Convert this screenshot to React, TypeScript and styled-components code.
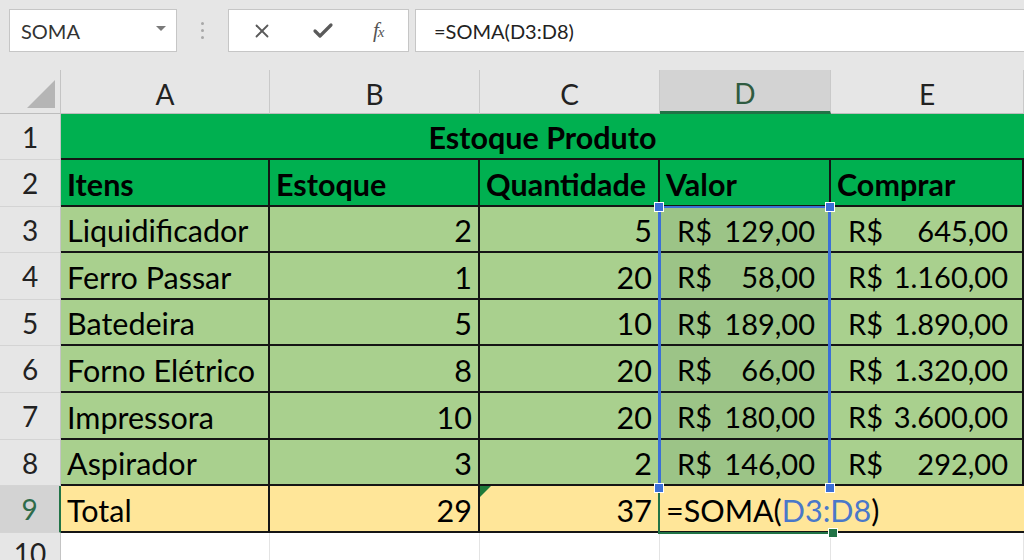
import React from 'react'
import styled, { createGlobalStyle } from 'styled-components'
import { X, Check } from 'lucide-react'

const GlobalStyle = createGlobalStyle`
  html, body {
    margin: 0;
    background: #ffffff;
    font-family: Lato, "Open Sans", sans-serif;
  }
`

const GREEN = '#00b050'
const LIGHT = '#a9d08e'
const PICKED = '#9cc487'
const TOTAL = '#ffe699'
const XL = '#217346'

const Page = styled.div`
  width: 1024px;
  height: 560px;
  overflow: hidden;
  background: #ffffff;
`

const FormulaBar = styled.div`
  display: flex;
  align-items: flex-start;
  height: 70px;
  box-sizing: border-box;
  padding: 9px 0 0 9px;
  background: #e6e6e6;
`

const NameBox = styled.div`
  width: 168px;
  height: 43px;
  box-sizing: border-box;
  display: flex;
  align-items: center;
  justify-content: space-between;
  padding: 0 10px 0 11px;
  background: #fff;
  border: 1px solid #c6c6c6;
  font-size: 20px;
  color: #333;
`

const Caret = styled.span`
  width: 0;
  height: 0;
  border-left: 5px solid transparent;
  border-right: 5px solid transparent;
  border-top: 5px solid #7a7a7a;
  margin-top: -4px;
`

const Dots = styled.div`
  width: 51px;
  height: 43px;
  display: flex;
  flex-direction: column;
  align-items: center;
  justify-content: center;
  gap: 4px;
  & > i {
    width: 3px;
    height: 3px;
    border-radius: 50%;
    background: #a8a8a8;
  }
`

const IconBox = styled.div`
  width: 181px;
  height: 43px;
  box-sizing: border-box;
  display: flex;
  align-items: center;
  padding-left: 22px;
  gap: 38px;
  background: #fff;
  border: 1px solid #c6c6c6;
  color: #5a5a5a;
`

const Fx = styled.span`
  font-family: "Liberation Serif", serif;
  font-style: italic;
  font-size: 21px;
  color: #555;
  letter-spacing: -1px;
  & > small {
    font-size: 15px;
  }
`

const FormulaInput = styled.div`
  flex: 1;
  height: 43px;
  margin-left: 6px;
  margin-right: -2px;
  box-sizing: border-box;
  display: flex;
  align-items: center;
  padding-left: 18px;
  background: #fff;
  border: 1px solid #c6c6c6;
  font-size: 20px;
  color: #222;
`

const Sheet = styled.div`
  display: grid;
  grid-template-columns: 61px 209px 210px 180px 171px 193px;
  grid-template-rows: 44px 46px 47px 46px 47px 46px 47px 47px 46px 47px 40px;
  font-size: 30.5px;
  color: #000;
`

type Place = { $row: number; $col: number; $span?: number }

const Placed = styled.div<Place>`
  grid-row: ${p => p.$row};
  grid-column: ${p => p.$col} / span ${p => p.$span ?? 1};
  box-sizing: border-box;
  min-width: 0;
`

const Corner = styled(Placed)`
  background: #e6e6e6;
  border-right: 1px solid #c4c4c4;
  border-bottom: 1px solid #bdbdbd;
  display: flex;
  align-items: flex-end;
  justify-content: flex-end;
  padding: 0 5px 5px 0;
  & > span {
    width: 0;
    height: 0;
    border-left: 28px solid transparent;
    border-bottom: 28px solid #b5b5b5;
  }
`

const ColHead = styled(Placed)<{ $active?: boolean }>`
  display: flex;
  align-items: center;
  justify-content: center;
  padding-top: 4px;
  background: ${p => (p.$active ? '#d3d3d3' : '#e6e6e6')};
  color: ${p => (p.$active ? '#2f5b40' : '#222')};
  font-size: 28px;
  border-right: 1px solid #c9c9c9;
  border-bottom: ${p => (p.$active ? `3px solid ${XL}` : '1px solid #bdbdbd')};
`

const RowHead = styled(Placed)<{ $active?: boolean }>`
  display: flex;
  align-items: center;
  justify-content: center;
  background: ${p => (p.$active ? '#d3d3d3' : '#e6e6e6')};
  color: ${p => (p.$active ? '#2f6b4a' : '#222')};
  font-size: 28px;
  border-bottom: 1px solid #d4d4d4;
  border-right: ${p => (p.$active ? `2px solid ${XL}` : '1px solid #c4c4c4')};
`

const Cell = styled(Placed)<{
  $bg: string
  $align?: 'left' | 'right' | 'center'
  $bold?: boolean
  $open?: boolean
  $spill?: boolean
}>`
  display: flex;
  align-items: center;
  justify-content: ${p => (p.$align === 'right' ? 'flex-end' : p.$align === 'center' ? 'center' : 'flex-start')};
  padding: 2px 6px 0 6px;
  background: ${p => p.$bg};
  font-weight: ${p => (p.$bold ? 700 : 400)};
  border-bottom: 2px solid #151515;
  border-right: ${p => (p.$open ? 'none' : '2px solid #151515')};
  white-space: nowrap;
  overflow: ${p => (p.$spill ? 'visible' : 'hidden')};
  position: relative;
`

const Money = styled(Cell)`
  justify-content: space-between;
  padding: 2px 14px 0 17px;
  font-size: 29px;
  gap: 10px;
`

const BlankCell = styled(Placed)`
  background: #fff;
  border-right: 1px solid #e4e4e4;
`

const ErrorMark = styled.span`
  position: absolute;
  left: 0;
  top: 0;
  width: 0;
  height: 0;
  border-top: 11px solid #1f7a3a;
  border-right: 11px solid transparent;
`

const Ref = styled.span`
  color: #4a78c9;
`

const Selection = styled(Placed)`
  position: relative;
  z-index: 2;
  margin: -1px 0 -1px -2px;
  border-left: 3px solid #3b6fd6;
  border-right: 3px solid #3b6fd6;
  border-top: 2px solid #3b6fd6;
  pointer-events: none;
`

const ActiveCell = styled(Placed)`
  position: relative;
  z-index: 1;
  margin: 0 0 -1px -2px;
  border-left: 2px solid ${XL};
  border-bottom: 2px solid ${XL};
  pointer-events: none;
`

const Handle = styled.span<{ $x: 'l' | 'r'; $y: 't' | 'b'; $green?: boolean }>`
  position: absolute;
  width: 8px;
  height: 8px;
  background: ${p => (p.$green ? XL : '#3b6fd6')};
  border: 1px solid #fff;
  ${p => (p.$x === 'l' ? 'left: -7px;' : 'right: -7px;')}
  ${p => (p.$y === 't' ? 'top: -6px;' : 'bottom: -6px;')}
`

const items = [
  ['Liquidificador', 2, 5, '129,00', '645,00'],
  ['Ferro Passar', 1, 20, '58,00', '1.160,00'],
  ['Batedeira', 5, 10, '189,00', '1.890,00'],
  ['Forno Elétrico', 8, 20, '66,00', '1.320,00'],
  ['Impressora', 10, 20, '180,00', '3.600,00'],
  ['Aspirador', 3, 2, '146,00', '292,00'],
] as const

const letters = ['A', 'B', 'C', 'D', 'E']
const heads = ['Itens', 'Estoque', 'Quantidade', 'Valor', 'Comprar']

const App = () => {
  return (
    <Page>
      <GlobalStyle />
      <FormulaBar>
        <NameBox>
          SOMA
          <Caret />
        </NameBox>
        <Dots>
          <i />
          <i />
          <i />
        </Dots>
        <IconBox>
          <X size={22} strokeWidth={2} />
          <Check size={24} strokeWidth={3.2} />
          <Fx>
            f<small>x</small>
          </Fx>
        </IconBox>
        <FormulaInput>=SOMA(D3:D8)</FormulaInput>
      </FormulaBar>

      <Sheet>
        <Corner $row={1} $col={1}>
          <span />
        </Corner>
        {letters.map((l, i) => (
          <ColHead key={l} $row={1} $col={i + 2} $active={l === 'D'}>
            {l}
          </ColHead>
        ))}

        {Array.from({ length: 10 }, (_, i) => (
          <RowHead key={i} $row={i + 2} $col={1} $active={i === 8}>
            {i + 1}
          </RowHead>
        ))}

        <Cell $row={2} $col={2} $span={5} $bg={GREEN} $align="center" $bold $open>
          Estoque Produto
        </Cell>

        {heads.map((h, i) => (
          <Cell key={h} $row={3} $col={i + 2} $bg={GREEN} $bold>
            {h}
          </Cell>
        ))}

        {items.map((it, r) => (
          <React.Fragment key={it[0]}>
            <Cell $row={r + 4} $col={2} $bg={LIGHT}>{it[0]}</Cell>
            <Cell $row={r + 4} $col={3} $bg={LIGHT} $align="right">{it[1]}</Cell>
            <Cell $row={r + 4} $col={4} $bg={LIGHT} $align="right">{it[2]}</Cell>
            <Money $row={r + 4} $col={5} $bg={PICKED}>
              <span>R$</span>
              <span>{it[3]}</span>
            </Money>
            <Money $row={r + 4} $col={6} $bg={LIGHT}>
              <span>R$</span>
              <span>{it[4]}</span>
            </Money>
          </React.Fragment>
        ))}

        <Cell $row={10} $col={2} $bg={TOTAL}>Total</Cell>
        <Cell $row={10} $col={3} $bg={TOTAL} $align="right">29</Cell>
        <Cell $row={10} $col={4} $bg={TOTAL} $align="right">
          <ErrorMark />
          37
        </Cell>
        <Cell $row={10} $col={6} $bg={TOTAL} $open />
        <Cell $row={10} $col={5} $bg={TOTAL} $open $spill>
          =SOMA(<Ref>D3:D8</Ref>)
        </Cell>

        {[2, 3, 4, 5, 6].map(c => (
          <BlankCell key={c} $row={11} $col={c} />
        ))}

        <ActiveCell $row={10} $col={5}>
          <Handle $x="r" $y="b" $green />
        </ActiveCell>
        <Selection $row={4} $col={5} style={{ gridRowEnd: 'span 6' }}>
          <Handle $x="l" $y="t" />
          <Handle $x="r" $y="t" />
          <Handle $x="l" $y="b" />
          <Handle $x="r" $y="b" />
        </Selection>
      </Sheet>
    </Page>
  )
}

export default App
